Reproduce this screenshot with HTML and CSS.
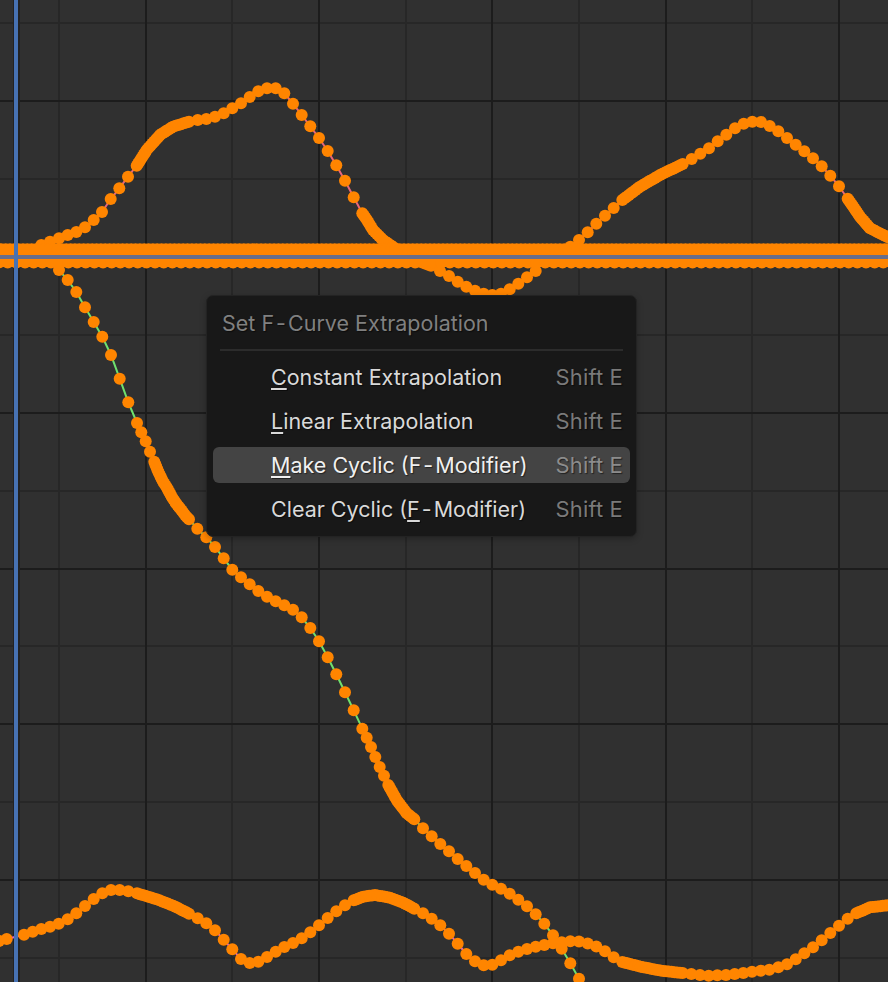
FILE: index.html
```html
<!DOCTYPE html>
<html lang="en">
<head>
  <meta charset="UTF-8">
  <title>Graph Editor</title>
  <link rel="stylesheet" href="styles.css">
</head>
<body>
  <div class="graph-editor">
    <svg id="graph" class="graph-canvas" width="888" height="982" viewBox="0 0 888 982"></svg>

    <div class="menu">
      <div class="menu-title">Set F<span class="dash">-</span>Curve Extrapolation</div>
      <div class="menu-items">
        <div class="menu-item">
          <span class="item-label"><span class="accel">C</span>onstant Extrapolation</span>
          <span class="item-key">Shift E</span>
        </div>
        <div class="menu-item">
          <span class="item-label"><span class="accel">L</span>inear Extrapolation</span>
          <span class="item-key">Shift E</span>
        </div>
        <div class="menu-item active">
          <span class="item-label"><span class="accel">M</span>ake Cyclic (F<span class="dash">-</span>Modifier)</span>
          <span class="item-key">Shift E</span>
        </div>
        <div class="menu-item">
          <span class="item-label">Clear Cyclic (<span class="accel">F</span><span class="dash">-</span>Modifier)</span>
          <span class="item-key">Shift E</span>
        </div>
      </div>
    </div>
  </div>

  <script src="script.js"></script>
</body>
</html>
```

FILE: styles.css
```css
body {
  margin: 0;
  background-color: #303030;
  overflow: hidden;
  font-family: "Inter", "Liberation Sans", sans-serif;
}

.graph-editor {
  position: relative;
  width: 888px;
  height: 982px;
  overflow: hidden;
}

.graph-canvas {
  display: block;
}

.menu {
  position: absolute;
  left: 206px;
  top: 295px;
  width: 431px;
  height: 242px;
  box-sizing: border-box;
  padding: 0 6px;
  background-color: #181818;
  border: 1px solid #232323;
  border-radius: 7px;
  box-shadow: 0 2px 6px rgba(0, 0, 0, 0.25);
}

.menu-title {
  height: 53px;
  margin: 0 7px 8px 7px;
  padding-left: 2px;
  line-height: 55px;
  font-size: 21.5px;
  color: #808080;
  border-bottom: 2px solid #2c2c2c;
  text-shadow: 1px 1px 1px rgba(0, 0, 0, 0.5);
}

.menu-items {
  display: flex;
  flex-direction: column;
  gap: 8px;
}

.menu-item {
  display: flex;
  justify-content: space-between;
  align-items: center;
  height: 36px;
  padding: 0 7px 0 58px;
  border-radius: 6px;
  font-size: 21.5px;
  color: #d9d9d9;
  text-shadow: 1px 1px 1px rgba(0, 0, 0, 0.5);
}

.menu-item.active {
  background-color: #444444;
  color: #f0f0f0;
}

.item-key {
  font-size: 22px;
  letter-spacing: 0.15px;
  color: #7a7a7a;
}

.active .item-key {
  color: #8c8c8c;
}

.dash {
  margin: 0 2px;
}

.accel {
  text-decoration: underline;
  text-decoration-thickness: 2px;
  text-underline-offset: 3px;
}
```

FILE: script.js
```js
var NS = 'http://www.w3.org/2000/svg';
var svg = document.getElementById('graph');

var DOT_RADIUS = 6;
var ORANGE = '#ff8500';

// third value = fill with baked dots up to the next point
var curveLeft = [
  [41.3,245],[50,241.7],[59,238.3],[67.7,235],[76.3,232],[85,227.3],[93.7,220],[102,212],
  [110.7,199],[119.3,188.3],[128,176.7],[136.7,165.7,1],[146.7,150,1],[160,135,1],[173,126.7,1],
  [189,121.7],[197.7,120],[206.3,119],[215,116.7],[223.7,113.3],[232.3,108.3],[241,103.3],
  [249.7,97],[258.3,91.3],[267,88.3],[275.7,88.3],[284.3,93.3],[293,103.7],[301.7,115],
  [310.3,126.3],[319,138],[327.7,151],[336.3,165.3],[345,180.7],[353.7,197.3],[362.3,213.3,1],
  [367,220,1],[373,230,1],[383,240,1],[393,247,1],[410,258,1],[431,265.7],[440,271],[449,276],
  [457.7,281.7],[466.3,286.7],[475,290.7],[483.7,293.7],[492.3,295],[501,293.7],[509.7,289.3],
  [518.3,283.7],[527,277.3],[535.7,271]
];

var curveRight = [
  [570.3,246.7],[579,240],[587.7,232.3],[596.3,223.7],[605,215.7],[613.7,208],[622.3,200,1],
  [640,186.7,1],[660,175,1],[682.7,164],[691.7,159],[700.3,153.7],[709,148.3],[717.7,141.3],
  [726.3,134.7],[735,128.3],[743.7,123.7],[752.3,121.7],[761,122],[769.7,126],[778.3,131.3],
  [787,138],[795.7,144.7],[804.3,151.3],[813,158.3],[821.7,166.3],[830.3,175.7],[839,186.3],
  [847.7,198.7,1],[853.3,206.7,1],[860,216.7,1],[870,228.3,1],[888,237.3]
];

var curveDown = [
  [59,270],[67.7,280],[76.3,292],[85,307.3],[93.7,322],[102.3,336.7],[111,355],[119.7,378.7],
  [128.3,402.3],[137,423],[141.3,432.3],[145.7,441.3],[150,451.7],[154.3,461.7,1],[158.3,471.7,1],
  [162.7,481,1],[167.3,488.3,1],[171.7,496.7,1],[176,503.3,1],[180,508.3,1],[185,515,1],
  [189,519.3],[197.3,528.7],[206.3,537.3],[215,547],[223.7,558.3],[232.3,569.7],[241,577.3],
  [249.7,584.3],[258.3,591],[267,596.7],[275.7,601.3],[284.3,605.3],[293,609.7],[301.7,617.3],
  [310.3,628],[319,641.3],[327.7,657.3],[336.3,674.3],[345,692.3],[353.7,710.3],[362.3,728.7],
  [366.7,737.7],[371,747],[375.3,757],[379.7,767],[384,775.7],[388.3,785,1],[396.7,800,1],
  [406.7,813.3,1],[414.3,819.3],[423,828.3],[431.7,836.3],[440.3,844],[449,851.3],[457.7,859],
  [466.3,866],[475,873],[483.7,879.7],[492.3,884.7],[501,888.7],[509.7,893.7],[518.3,899.7],
  [527,906.3],[535.7,914.3],[544.3,923.7],[553,935.3],[561.7,948.7],[570.3,963.3],[579,978.7]
];

var curveBottom = [
  [-1,941],[6.7,939],[24,934.7],[32.7,931.7],[41.3,929],[50,926.7],[58.7,923.7],[67.7,919.3],
  [76.3,913.3],[85,906],[93.7,899],[102.3,893.3],[111,890],[119.7,890],[128.3,891.3],[137,893.3,1],
  [156.7,899.3,1],[173.3,905.7,1],[189,913.7],[197.7,918.3],[206.3,923.3],[215,930.3],[223.7,939.7],
  [232.3,949.3],[241,959],[249.7,963],[258.3,961.7],[267,957],[275.7,951.7],[284.3,947],[293,943],
  [301.7,938.3],[310.3,932.3],[319,925.3],[327.7,918],[336.3,911.3],[345,905.3],[353.7,900.3,1],
  [363.3,896.7,1],[375,895,1],[390,897.7,1],[403.3,902.7,1],[414.3,908.7],[423,913.3],[431.7,918.7],
  [440.3,925.3],[449,933.7],[457.7,943.7],[466.3,954],[475,961.3],[483.7,965.3],[492.3,964.7],
  [501,960.3],[509.7,955.3],[518.3,951.7],[527,949],[535.7,946.7],[544.3,945],[553,943.3],
  [561.7,942.3],[570.3,941.3],[579,941.5],[587.7,943.5],[596.3,946.5],[605,951.3],[613.7,957.3],
  [622.3,962,1],[643.3,967.3,1],[663.3,971,1],[682.7,973],[691.3,974],[700,975],[708.7,975.7],
  [717.3,975.3],[726,975],[734.7,974],[743.3,973],[752,971.7],[760.7,970.7],[769.3,969.7],
  [778.3,967.3],[787,964.3],[795.7,959.3],[804.3,953.3],[813,947.3],[821.7,940.3],[830.3,933],
  [839,925.7],[847.7,918.7],[856.3,913.3,1],[870,907.3,1],[888,905.3]
];

function add(tag, attrs) {
  var el = document.createElementNS(NS, tag);
  for (var key in attrs) {
    el.setAttribute(key, attrs[key]);
  }
  svg.appendChild(el);
  return el;
}

function rect(x, y, w, h, fill) {
  add('rect', { x: x, y: y, width: w, height: h, fill: fill, 'shape-rendering': 'crispEdges' });
}

function drawGrid() {
  [58, 231, 405, 578, 751].forEach(function(x) { rect(x, 0, 2, 982, '#272727'); });
  [22, 178, 334, 490, 645, 801, 957].forEach(function(y) { rect(0, y, 888, 2, '#272727'); });
  [145, 318, 491, 665, 838].forEach(function(x) { rect(x, 0, 2, 982, '#1c1c1c'); });
  [100, 256, 412, 568, 723, 879].forEach(function(y) { rect(0, y, 888, 2, '#1c1c1c'); });
}

function drawLine(points, color) {
  var str = points.map(function(p) { return p[0] + ',' + p[1]; }).join(' ');
  add('polyline', { points: str, fill: 'none', stroke: color, 'stroke-width': 2 });
}

function dot(x, y) {
  add('circle', { cx: x, cy: y, r: DOT_RADIUS, fill: ORANGE });
}

function drawDots(points) {
  points.forEach(function(p, i) {
    dot(p[0], p[1]);
    if (p[2] && points[i + 1]) {
      var next = points[i + 1];
      var len = Math.hypot(next[0] - p[0], next[1] - p[1]);
      var steps = Math.ceil(len / 3);
      for (var s = 1; s < steps; s++) {
        dot(p[0] + (next[0] - p[0]) * s / steps, p[1] + (next[1] - p[1]) * s / steps);
      }
    }
  });
}

function drawBand() {
  // all the flat channels pile up here
  rect(0, 245, 888, 22, ORANGE);
  for (var x = -3; x < 892; x += 4.33) {
    dot(x, 249.2);
  }
  for (var x2 = -1; x2 < 892; x2 += 8.67) {
    dot(x2, 262.4);
  }
  rect(0, 255, 888, 4, '#686e8a');
}

drawGrid();
rect(13, 0, 1, 982, '#222222');
rect(18, 0, 2, 982, '#222222');

drawLine(curveLeft, '#e8667a');
drawLine(curveRight, '#e8667a');
drawLine(curveDown, '#6ee06e');
drawLine(curveBottom, '#e060c8');

drawDots(curveLeft);
drawDots(curveRight);
drawDots(curveDown);
drawDots(curveBottom);
drawBand();

rect(14, 0, 4, 982, '#4772b3');
```
